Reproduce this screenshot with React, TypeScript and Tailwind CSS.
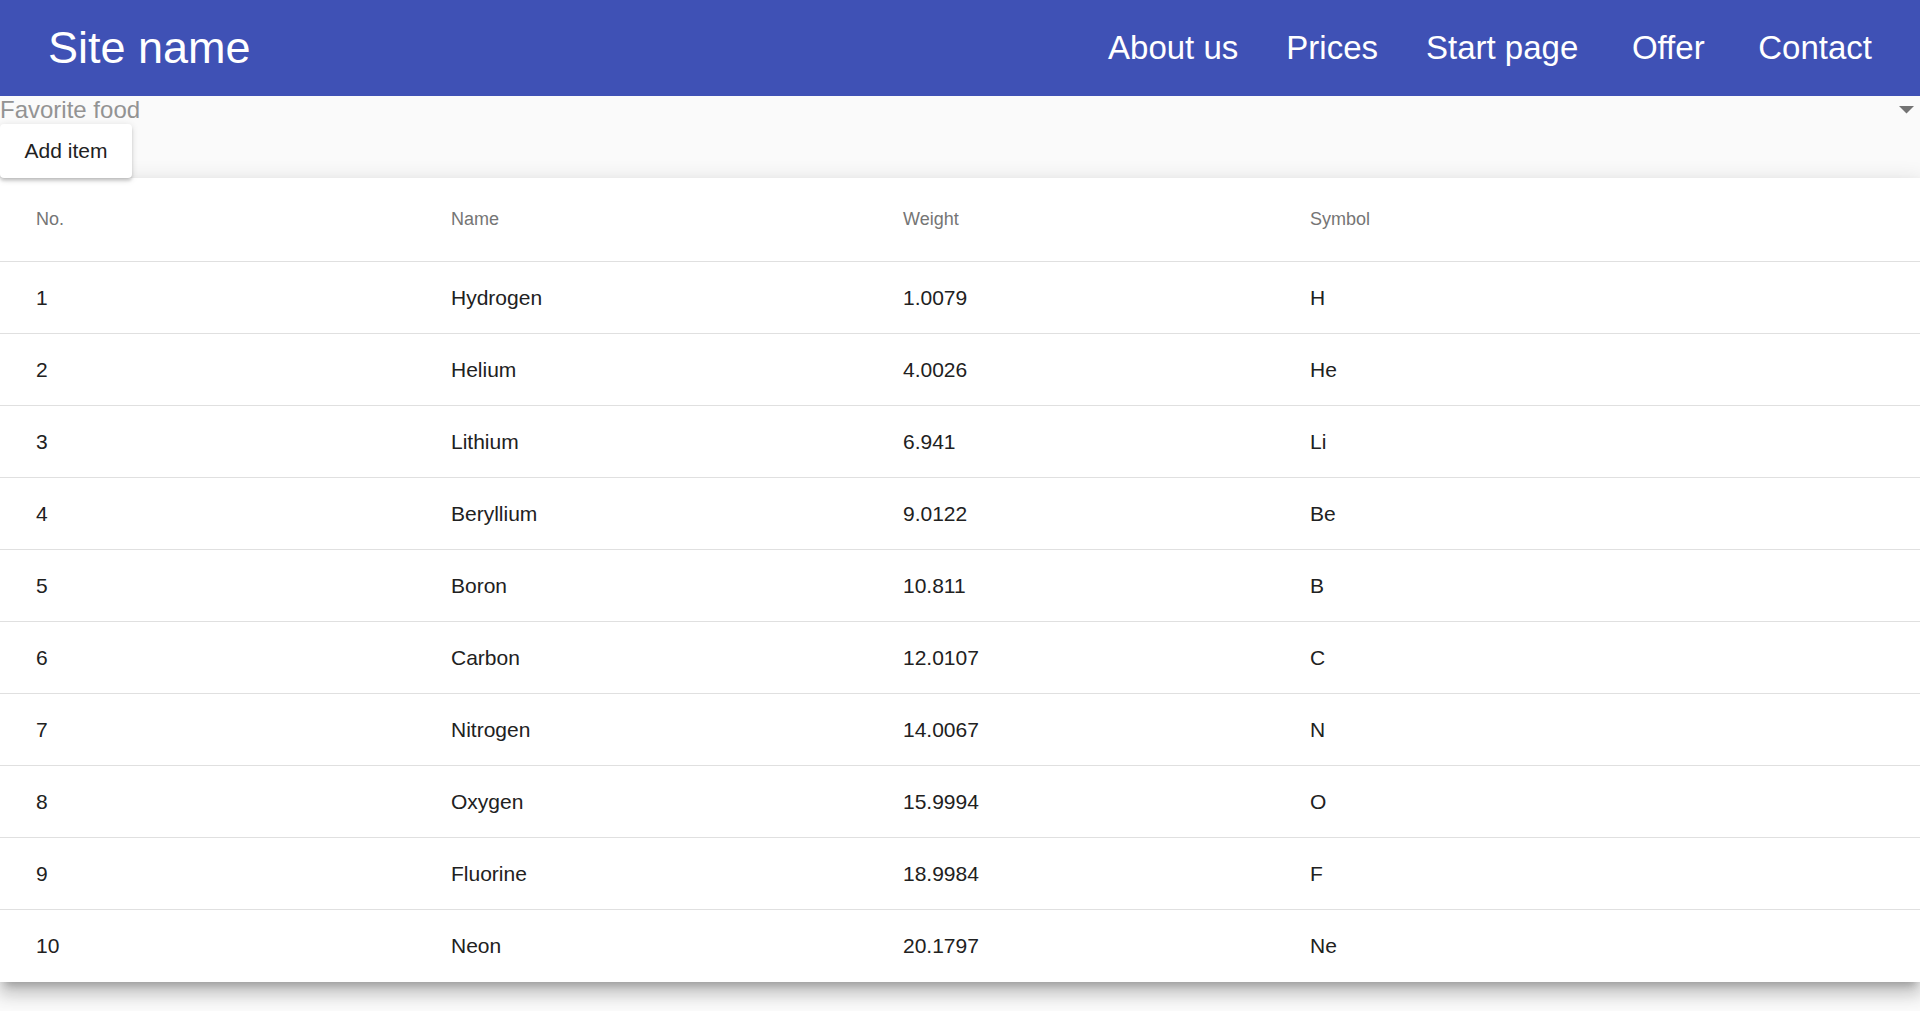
import React from 'react';

const navigation = ['About us', 'Prices', 'Start page', 'Offer', 'Contact'];

const elements = [
  { no: 1, name: 'Hydrogen', weight: '1.0079', symbol: 'H' },
  { no: 2, name: 'Helium', weight: '4.0026', symbol: 'He' },
  { no: 3, name: 'Lithium', weight: '6.941', symbol: 'Li' },
  { no: 4, name: 'Beryllium', weight: '9.0122', symbol: 'Be' },
  { no: 5, name: 'Boron', weight: '10.811', symbol: 'B' },
  { no: 6, name: 'Carbon', weight: '12.0107', symbol: 'C' },
  { no: 7, name: 'Nitrogen', weight: '14.0067', symbol: 'N' },
  { no: 8, name: 'Oxygen', weight: '15.9994', symbol: 'O' },
  { no: 9, name: 'Fluorine', weight: '18.9984', symbol: 'F' },
  { no: 10, name: 'Neon', weight: '20.1797', symbol: 'Ne' },
];

const cols = 'grid grid-cols-[451px_452px_407px_1fr] items-center';

const App = () => {
  return (
    <div className="min-h-screen bg-[#fafafa] font-['Liberation_Sans',Arial,sans-serif]">
      {/* Toolbar */}
      <header className="h-[96px] bg-[#3f51b5] text-white flex items-center justify-between pl-12 pr-6">
        <span className="text-[45px]">Site name</span>
        <nav className="flex">
          {navigation.map((item) => (
            <a
              key={item}
              href="#"
              className="min-w-[132px] px-6 text-center text-[33px] text-white"
            >
              {item}
            </a>
          ))}
        </nav>
      </header>

      {/* Select */}
      <div className="flex items-start justify-between h-[28px]">
        <span className="text-[24px] leading-[27px] text-[#939393]">Favorite food</span>
        <svg width="15" height="8" viewBox="0 0 15 8" className="mt-[10px] mr-[6px]">
          <polygon points="0,0 15,0 7.5,7.5" fill="#737373" />
        </svg>
      </div>

      <button className="h-[54px] min-w-[132px] px-6 bg-white rounded-[4px] text-[21px] text-[#212121] shadow-[0_3px_1.5px_-3px_rgba(0,0,0,0.2),0_3px_3px_0_rgba(0,0,0,0.14),0_1.5px_7.5px_0_rgba(0,0,0,0.12)]">
        Add item
      </button>

      {/* Table */}
      <div className="bg-white shadow-[0_7.5px_7.5px_-4.5px_rgba(0,0,0,0.2),0_12px_15px_1.5px_rgba(0,0,0,0.14),0_4.5px_21px_3px_rgba(0,0,0,0.12)]">
        <div className={`${cols} h-[84px] border-b border-[#e0e0e0] text-[18px] text-[#757575]`}>
          <div className="pl-9">No.</div>
          <div>Name</div>
          <div>Weight</div>
          <div>Symbol</div>
        </div>
        {elements.map((el, i) => (
          <div
            key={el.no}
            className={`${cols} h-[72px] text-[21px] text-[#212121] ${i < elements.length - 1 ? 'border-b border-[#e0e0e0]' : ''}`}
          >
            <div className="pl-9">{el.no}</div>
            <div>{el.name}</div>
            <div>{el.weight}</div>
            <div>{el.symbol}</div>
          </div>
        ))}
      </div>
    </div>
  );
};

export default App;
